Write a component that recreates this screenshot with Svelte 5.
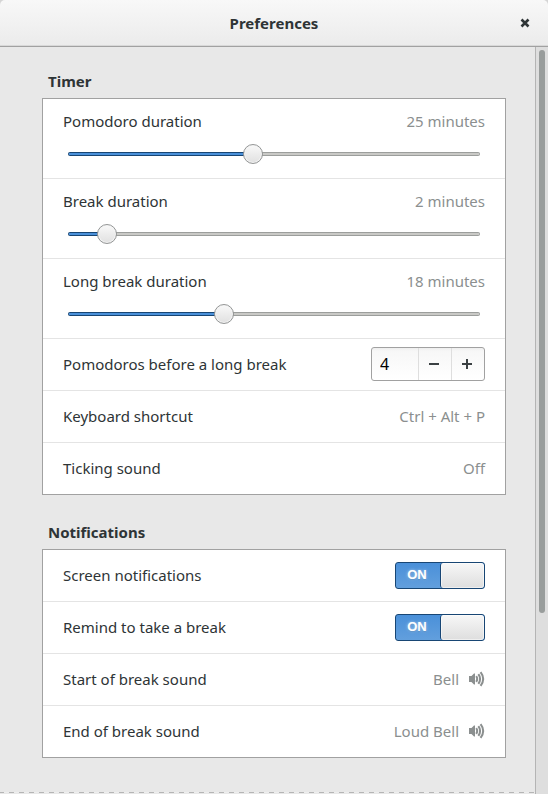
<script>
  const durations = $state([
    { id: 'pomodoro', label: 'Pomodoro duration', minutes: 25, position: 446 },
    { id: 'break', label: 'Break duration', minutes: 2, position: 74 },
    { id: 'long-break', label: 'Long break duration', minutes: 18, position: 372 }
  ]);
  const actions = [
    { label: 'Keyboard shortcut', value: 'Ctrl + Alt + P' },
    { label: 'Ticking sound', value: 'Off' }
  ];
  const switches = $state([
    { id: 'screen', label: 'Screen notifications', on: true },
    { id: 'remind', label: 'Remind to take a break', on: true }
  ]);
  const sounds = [
    { label: 'Start of break sound', value: 'Bell' },
    { label: 'End of break sound', value: 'Loud Bell' }
  ];
  let cycle = $state(4);
</script>

<div class="window">
  <header>
    <h1>Preferences</h1>
    <button class="close" aria-label="Close">
      <svg width="10" height="10" viewBox="0 0 10 10"><path d="M1.5 1.5 8.5 8.5M8.5 1.5 1.5 8.5" stroke="#2e3436" stroke-width="2.6" /></svg>
    </button>
  </header>

  <main>
    <section>
      <h2>Timer</h2>
      <div class="card">
        {#each durations as d (d.id)}
          <div class="row duration">
            <div class="line">
              <label for={d.id}>{d.label}</label>
              <output for={d.id}>{d.minutes} minutes</output>
            </div>
            <input id={d.id} type="range" min="0" max="1000" bind:value={d.position} style="--fill: {d.position / 10}%" />
          </div>
        {/each}
        <div class="row line raised">
          <label for="cycle">Pomodoros before a long break</label>
          <div class="spin">
            <input id="cycle" type="text" inputmode="numeric" bind:value={cycle} />
            <button aria-label="Decrease" onclick={() => cycle--}>
              <svg width="12" height="12" viewBox="0 0 12 12"><path d="M1 6H11" stroke="#3b4143" stroke-width="2" /></svg>
            </button>
            <button aria-label="Increase" onclick={() => cycle++}>
              <svg width="12" height="12" viewBox="0 0 12 12"><path d="M1 6H11M6 1V11" stroke="#3b4143" stroke-width="2" /></svg>
            </button>
          </div>
        </div>
        {#each actions as a}
          <button class="row line raised"><span>{a.label}</span><span class="value">{a.value}</span></button>
        {/each}
      </div>
    </section>

    <section>
      <h2>Notifications</h2>
      <div class="card">
        {#each switches as s (s.id)}
          <div class="row line">
            <label class="name" for={s.id}>{s.label}</label>
            <label class="switch" class:off={!s.on}>
              <input id={s.id} type="checkbox" role="switch" bind:checked={s.on} />
              <span class="state">{s.on ? 'ON' : 'OFF'}</span>
              <span class="knob"></span>
            </label>
          </div>
        {/each}
        {#each sounds as s}
          <button class="row line raised">
            <span>{s.label}</span>
            <span class="value">
              {s.value}
              <svg width="16" height="16" viewBox="0 0 16 16" aria-hidden="true">
                <path d="M0 5H2.5L5 2.4H6V13.6H5L2.5 11H0Z" fill="#8b8f8f" />
                <path d="M7.2 5.2Q9.2 8 7.2 10.8M9.4 3.2Q12.8 8 9.4 12.8M11.6 1.2Q16.8 8 11.6 14.8" fill="none" stroke="#8b8f8f" stroke-width="2" />
              </svg>
            </span>
          </button>
        {/each}
      </div>
    </section>
    <div class="scrollbar"><div class="thumb"></div></div>
    <div class="undershoot"></div>
  </main>
</div>

<style>
  :global(body) {
    margin: 0;
    background: #d5d5d5;
  }
  .window {
    display: flex;
    flex-direction: column;
    min-height: 100vh;
    color: #2e3436;
    font: 15px/20px "Noto Sans", "Open Sans", sans-serif;
  }
  header {
    display: grid;
    grid-template-columns: 1fr auto 1fr;
    align-items: center;
    box-sizing: border-box;
    height: 47px;
    padding: 0 16px;
    border-bottom: 1px solid #a1a1a1;
    border-radius: 5px 5px 0 0;
    background: linear-gradient(#f8f8f8, #ebebeb);
    box-shadow: inset 0 -1px #d8d8d8;
  }
  h1,
  h2 {
    margin: 0;
    font-size: 15px;
    font-weight: 700;
    line-height: 20px;
  }
  h1 {
    grid-column: 2;
  }
  button,
  input {
    margin: 0;
    padding: 0;
    border: 0;
    background: none;
    color: inherit;
    font: inherit;
  }
  .close {
    display: flex;
    justify-self: end;
    padding: 2px;
  }
  main {
    position: relative;
    flex: 1;
    display: flex;
    flex-direction: column;
    gap: 27px;
    padding: 24px 42px 36px;
    background: #e8e8e8;
  }
  h2 {
    padding: 0 6px 7px;
  }
  .card {
    border: 1px solid #a1a1a1;
    background: #fff;
  }
  .row {
    box-sizing: border-box;
    width: 100%;
    height: 52px;
    padding: 0 20px;
    border-bottom: 1px solid #e4e4e4;
    text-align: left;
  }
  .row:last-child {
    height: 51px;
    border-bottom: 0;
  }
  .line {
    display: flex;
    align-items: center;
    justify-content: space-between;
  }
  .raised,
  .name {
    padding-bottom: 2px;
  }
  .duration {
    display: flex;
    flex-direction: column;
    gap: 13px;
    height: 80px;
    padding-top: 12px;
  }
  output,
  .value {
    color: #8b8f8f;
  }
  .value {
    display: flex;
    align-items: center;
    gap: 10px;
  }
  input[type='range'] {
    --inner: linear-gradient(90deg, #4a90d9 var(--fill), #c9c9c6 var(--fill));
    --edge: linear-gradient(90deg, #184674 var(--fill), #9c9e9c var(--fill));
    appearance: none;
    height: 20px;
    margin: 0 5px;
  }
  input[type='range']::-webkit-slider-runnable-track {
    height: 4px;
    border-radius: 2px;
    background: var(--inner) 1px 1px / calc(100% - 2px) 2px no-repeat, var(--edge);
  }
  input[type='range']::-webkit-slider-thumb {
    appearance: none;
    box-sizing: border-box;
    width: 20px;
    height: 20px;
    margin-top: -8px;
    border: 1px solid #949696;
    border-radius: 50%;
    background: linear-gradient(#f9f9f9, #e0e0e0);
    box-shadow: inset 0 0 0 1px #f4f4f4;
  }
  .spin {
    display: flex;
    box-sizing: border-box;
    width: 114px;
    height: 34px;
    border: 1px solid #a1a1a1;
    border-radius: 3px;
    background: linear-gradient(#eeeeee, #f7f7f7 3px, #fff);
  }
  .spin input {
    flex: 1;
    min-width: 0;
    padding-left: 8px;
    color: #000;
    font-size: 16px;
  }
  .spin button {
    display: flex;
    align-items: center;
    justify-content: center;
    box-sizing: border-box;
    width: 33px;
    padding-right: 2px;
    border-left: 1px solid #dedede;
  }
  .switch {
    display: flex;
    box-sizing: border-box;
    width: 90px;
    height: 27px;
    border: 1px solid #184674;
    border-radius: 3px;
    background: linear-gradient(#4a90d9, #629fdd);
    overflow: hidden;
  }
  .switch.off {
    flex-direction: row-reverse;
    border-color: #a1a1a1;
    background: #ddd;
  }
  .switch input {
    position: absolute;
    opacity: 0;
  }
  .state {
    flex: 1;
    padding-right: 2px;
    color: #fff;
    font: bold 13px/24px "Liberation Sans", sans-serif;
    text-align: center;
    text-shadow: 0 0 3px #ffffff90, 0 1px 1px #1846744d;
  }
  .knob {
    box-sizing: border-box;
    width: 44px;
    border-left: 1px solid #184674;
    border-radius: 3px;
    background: linear-gradient(#f7f7f7, #dedede);
    box-shadow: inset 0 0 0 1px #ffffff80;
  }
  .scrollbar {
    position: absolute;
    top: 0;
    right: 0;
    bottom: 0;
    box-sizing: border-box;
    width: 13px;
    padding: 3px;
    border-left: 1px solid #b4b4b4;
    background: #dedede;
  }
  .thumb {
    width: 6px;
    height: 76%;
    border-radius: 3px;
    background: #999d9c;
  }
  .undershoot {
    position: absolute;
    right: 13px;
    bottom: 1px;
    left: 0;
    height: 1px;
    background: repeating-linear-gradient(90deg, #b5b5b5 0 4px, #ededed 4px 9px, #b5b5b5 9px 10px);
  }
</style>
